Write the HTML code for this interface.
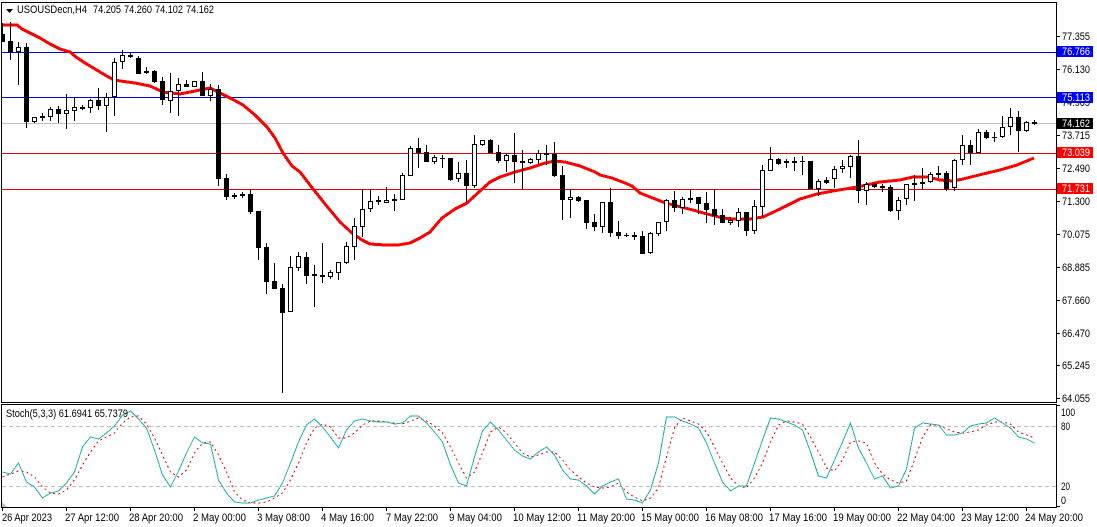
<!DOCTYPE html>
<html>
<head>
<meta charset="utf-8">
<title>USOUSDecn,H4</title>
<style>
html,body{margin:0;padding:0;background:#fff;width:1097px;height:527px;overflow:hidden}
svg{display:block}
text{font-family:"Liberation Sans",sans-serif;font-size:11px;fill:#000}
.w{fill:#fff}
.c{shape-rendering:crispEdges}
</style>
</head>
<body>
<svg width="1097" height="527" viewBox="0 0 1097 527" xmlns="http://www.w3.org/2000/svg">
<rect width="1097" height="527" fill="#fff"/>
<defs><clipPath id="m"><rect x="2" y="3" width="1054" height="399"/></clipPath><clipPath id="s"><rect x="2" y="405" width="1054" height="102"/></clipPath></defs>

<!-- horizontal levels -->
<g class="c" fill="none" stroke-width="1">
<path d="M2 52.5H1056M2 97.5H1056" stroke="#0000e6"/>
<path d="M2 123.5H1056" stroke="#c0c0c0"/>
<path d="M2 153.5H1056M2 189.5H1056" stroke="#dc0000"/>
</g>

<g clip-path="url(#m)">
<!-- moving average -->
<polyline fill="none" stroke="#ff0000" stroke-width="3" class="c" points="2,25 17,25 22,29 30,33 40,38 50,44 60,49 70,52 76,57 85,63 95,69 105,75 112,79 120,81 135,83 150,86 163,92 180,94 190,92 200,90 210,88 222,94 232,99 243,105 255,115 267,127 275,138 283,153 292,166 300,172 310,185 325,204 340,222 352,233 362,240 370,244 385,245 398,245 410,243 420,238 430,232 442,218 455,209 467,203 480,191 490,182 500,177 515,172 530,168 545,163 555,161 565,162 580,166 595,172 600,175 612,178 625,183 632,186 640,193 650,197 663,202 673,205 693,210 707,214 723,218 733,219 750,219 763,217 780,209 800,199 817,194 833,191 857,187 880,182 900,180 913,177 928,177 940,180 953,181 963,179 983,174 1000,170 1017,165 1034,158"/>

<!-- wicks -->
<path class="c" fill="none" stroke="#000" stroke-width="1" d="M2.5 23V42M10.5 22V60M18.5 42V85M26.5 43V128M34.5 117V123M42.5 113V121M50.5 107V121M58.5 106V123M66.5 94V129M74.5 97V121M82.5 105V110M90.5 99V113M98.5 88V110M106.5 93V132M114.5 58V116M122.5 50V69M130.5 52V58M138.5 56V74M146.5 67V74M154.5 70V83M162.5 77V105M170.5 73V113M178.5 78V116M186.5 80V87M194.5 81V87M202.5 72V96M210.5 84V101M218.5 85V186M226.5 174V200M234.5 193V199M242.5 192V198M250.5 190V214M258.5 211V260M266.5 243V294M274.5 263V289M282.5 284V393M290.5 256V312M298.5 252V271M306.5 252V284M314.5 265V307M322.5 243V283M330.5 270V279M338.5 262V280M346.5 242V264M354.5 218V260M362.5 189V237M370.5 189V212M378.5 196V205M386.5 187V203M394.5 194V211M402.5 173V200M410.5 146V176M418.5 138V168M426.5 145V162M434.5 155V164M442.5 155V168M450.5 158V181M458.5 162V182M466.5 160V202M474.5 135V188M482.5 140V146M490.5 139V153M498.5 145V163M506.5 153V172M514.5 133V183M522.5 150V189M530.5 158V164M538.5 150V164M546.5 145V165M554.5 142V177M562.5 166V220M570.5 190V218M578.5 196V202M586.5 200V229M594.5 214V231M602.5 202V233M610.5 188V237M618.5 221V239M626.5 233V237M634.5 232V240M642.5 231V254M650.5 232V254M658.5 222V236M666.5 199V231M674.5 191V212M682.5 197V214M690.5 189V203M698.5 197V214M706.5 192V223M714.5 189V225M722.5 209V223M730.5 217V225M738.5 208V227M746.5 212V236M754.5 200V234M762.5 165V217M770.5 147V171M778.5 158V165M786.5 159V168M794.5 157V171M802.5 156V175M810.5 161V189M818.5 179V196M826.5 177V184M834.5 166V188M842.5 160V173M850.5 155V178M858.5 140V203M866.5 182V205M874.5 183V188M882.5 184V192M890.5 185V212M898.5 197V220M906.5 184V205M914.5 175V201M922.5 168V189M930.5 172V183M938.5 166V178M946.5 171V191M954.5 159V191M962.5 135V165M970.5 140V165M978.5 129V153M986.5 130V139M994.5 132V142M1002.5 116V138M1010.5 108V135M1018.5 111V152M1026.5 121V132M1034.5 120V125"/>

<!-- bear bodies -->
<path class="c" fill="#000" d="M0 34h5V42H0zM8 41h5V52H8zM24 47h5V122H24zM40 116h5V118H40zM56 109h5V114H56zM80 107h5V109H80zM96 100h5V106H96zM128 55h5V57H128zM136 58h5V74H136zM144 71h5V73H144zM152 71h5V82H152zM160 81h5V100H160zM184 84h5V87H184zM200 81h5V96H200zM216 89h5V179H216zM224 178h5V197H224zM232 195h5V197H232zM240 194h5V196H240zM248 194h5V212H248zM256 211h5V248H256zM264 247h5V282H264zM272 281h5V289H272zM280 288h5V313H280zM304 257h5V276H304zM312 274h5V276H312zM320 275h5V277H320zM392 199h5V201H392zM376 200h5V202H376zM416 148h5V153H416zM424 152h5V162H424zM440 158h5V159H440zM448 158h5V180H448zM464 173h5V186H464zM488 140h5V153H488zM496 152h5V161H496zM512 155h5V162H512zM520 161h5V163H520zM544 153h5V155H544zM552 154h5V176H552zM560 175h5V200H560zM576 197h5V201H576zM584 200h5V223H584zM592 222h5V227H592zM608 202h5V233H608zM616 232h5V236H616zM624 235h5V236H624zM632 235h5V237H632zM640 236h5V254H640zM672 200h5V208H672zM688 198h5V200H688zM696 197h5V204H696zM704 203h5V210H704zM712 209h5V216H712zM720 215h5V223H720zM744 212h5V231H744zM776 159h5V164H776zM784 161h5V163H784zM792 161h5V163H792zM800 161h5V162H800zM808 161h5V189H808zM824 180h5V183H824zM856 156h5V191H856zM872 184h5V187H872zM880 186h5V188H880zM888 187h5V211H888zM912 183h5V185H912zM920 182h5V184H920zM936 173h5V175H936zM944 173h5V189H944zM968 145h5V153H968zM984 132h5V138H984zM992 137h5V138H992zM1016 117h5V131H1016zM1032 122h5V124H1032z"/>

<!-- bull bodies -->
<path class="c" fill="#fff" stroke="#000" stroke-width="1" d="M16.5 47.5h4V51.5h-4zM32.5 117.5h4V121.5h-4zM48.5 109.5h4V116.5h-4zM64.5 110.5h4V113.5h-4zM72.5 107.5h4V110.5h-4zM88.5 100.5h4V107.5h-4zM104.5 97.5h4V105.5h-4zM112.5 62.5h4V96.5h-4zM120.5 55.5h4V61.5h-4zM168.5 91.5h4V100.5h-4zM176.5 84.5h4V90.5h-4zM192.5 81.5h4V86.5h-4zM208.5 89.5h4V95.5h-4zM288.5 267.5h4V311.5h-4zM296.5 256.5h4V267.5h-4zM328.5 272.5h4V276.5h-4zM336.5 262.5h4V272.5h-4zM344.5 246.5h4V262.5h-4zM352.5 226.5h4V246.5h-4zM360.5 209.5h4V226.5h-4zM368.5 201.5h4V208.5h-4zM384.5 200.5h4V202.5h-4zM400.5 175.5h4V199.5h-4zM408.5 148.5h4V175.5h-4zM432.5 157.5h4V161.5h-4zM456.5 173.5h4V178.5h-4zM472.5 144.5h4V185.5h-4zM480.5 140.5h4V144.5h-4zM504.5 155.5h4V160.5h-4zM528.5 159.5h4V162.5h-4zM536.5 153.5h4V159.5h-4zM568.5 197.5h4V199.5h-4zM600.5 202.5h4V226.5h-4zM648.5 233.5h4V252.5h-4zM656.5 222.5h4V233.5h-4zM664.5 200.5h4V221.5h-4zM680.5 199.5h4V207.5h-4zM728.5 220.5h4V222.5h-4zM736.5 212.5h4V220.5h-4zM752.5 206.5h4V230.5h-4zM760.5 170.5h4V206.5h-4zM768.5 159.5h4V170.5h-4zM816.5 181.5h4V188.5h-4zM832.5 169.5h4V178.5h-4zM840.5 166.5h4V168.5h-4zM848.5 156.5h4V166.5h-4zM864.5 184.5h4V190.5h-4zM896.5 200.5h4V210.5h-4zM904.5 184.5h4V198.5h-4zM928.5 174.5h4V181.5h-4zM952.5 160.5h4V187.5h-4zM960.5 145.5h4V159.5h-4zM976.5 132.5h4V152.5h-4zM1000.5 127.5h4V136.5h-4zM1008.5 117.5h4V126.5h-4zM1024.5 122.5h4V130.5h-4z"/>
</g>

<!-- indicator levels -->
<path class="c" d="M2 426.5H1056M2 486.5H1056" fill="none" stroke="#c0c0c0" stroke-width="1" stroke-dasharray="4 3"/>

<g clip-path="url(#s)">
<polyline fill="none" stroke="#ff0000" stroke-width="1" stroke-dasharray="2 3" class="c" points="2.5,477 10.5,474 18.5,471 26.5,472 34.5,477 42.5,487 50.5,493 58.5,494 66.5,490 74.5,480 82.5,465 90.5,452 98.5,441 106.5,437 114.5,433 122.5,423 130.5,417 138.5,416 146.5,424 154.5,438 162.5,455 170.5,472 178.5,477 186.5,470 194.5,453 202.5,443 210.5,442 218.5,455 226.5,472 234.5,492 242.5,500 250.5,503 258.5,503 266.5,502 274.5,498 282.5,493 290.5,480 298.5,463 306.5,443 314.5,428 322.5,424 330.5,427 338.5,438 346.5,438 354.5,433 362.5,425 370.5,421 378.5,421 386.5,422 394.5,423 402.5,424 410.5,421 418.5,418 426.5,421 434.5,426 442.5,433 450.5,447 458.5,463 466.5,478 474.5,472 482.5,453 490.5,432 498.5,427 506.5,433 514.5,443 522.5,453 530.5,457 538.5,455 546.5,452 554.5,452 562.5,460 570.5,470 578.5,477 586.5,483 594.5,487 602.5,488 610.5,487 618.5,483 626.5,492 634.5,497 642.5,501 650.5,498 658.5,488 666.5,457 674.5,428 682.5,418 690.5,421 698.5,424 706.5,432 714.5,447 722.5,463 730.5,478 738.5,486 746.5,488 754.5,478 762.5,463 770.5,442 778.5,425 786.5,421 794.5,422 802.5,424 810.5,437 818.5,452 826.5,468 834.5,471 842.5,460 850.5,442 858.5,441 866.5,443 874.5,463 882.5,474 890.5,480 898.5,483 906.5,481 914.5,460 922.5,437 930.5,425 938.5,425 946.5,429 954.5,432 962.5,433 970.5,432 978.5,430 986.5,425 994.5,422 1002.5,422 1010.5,424 1018.5,432 1026.5,435 1034.5,438"/>
<polyline fill="none" stroke="#20b2aa" stroke-width="1" class="c" points="2.5,472 10.5,474 18.5,463 26.5,482 34.5,487 42.5,498 50.5,493 58.5,491 66.5,483 74.5,472 82.5,447 90.5,437 98.5,439 106.5,433 114.5,426 122.5,415 130.5,411 138.5,419 146.5,428 154.5,450 162.5,475 170.5,487 178.5,471 186.5,453 194.5,437 202.5,443 210.5,444 218.5,480 226.5,493 234.5,502 242.5,503 250.5,503 258.5,500 266.5,498 274.5,496 282.5,483 290.5,463 298.5,442 306.5,425 314.5,419 322.5,427 330.5,437 338.5,448 346.5,430 354.5,421 362.5,419 370.5,421 378.5,422 386.5,422 394.5,424 402.5,423 410.5,416 418.5,416 426.5,423 434.5,432 442.5,442 450.5,465 458.5,483 466.5,486 474.5,457 482.5,431 490.5,422 498.5,430 506.5,440 514.5,450 522.5,456 530.5,459 538.5,452 546.5,447 554.5,455 562.5,470 570.5,479 578.5,480 586.5,486 594.5,494 602.5,486 610.5,482 618.5,479 626.5,499 634.5,500 642.5,503 650.5,490 658.5,463 666.5,417 674.5,417 682.5,421 690.5,424 698.5,428 706.5,443 714.5,463 722.5,482 730.5,491 738.5,486 746.5,486 754.5,463 762.5,440 770.5,418 778.5,419 786.5,422 794.5,425 802.5,430 810.5,452 818.5,476 826.5,478 834.5,460 842.5,442 850.5,423 858.5,448 866.5,463 874.5,479 882.5,476 890.5,488 898.5,486 906.5,469 914.5,428 922.5,423 930.5,424 938.5,425 946.5,435 954.5,435 962.5,433 970.5,426 978.5,424 986.5,423 994.5,418 1002.5,423 1010.5,428 1018.5,437 1026.5,439 1034.5,443"/>
</g>
<path d="M2 502L7 507H2z" fill="#c0c0c0"/>

<!-- frames and ticks -->
<path class="c" fill="none" stroke="#000" stroke-width="1" d="M1.5 2.5H1056.5V402.5H1.5zM1.5 404.5H1056.5V507.5H1.5zM1057 36.5h3M1057 69.5h3M1057 102.5h3M1057 135.5h3M1057 168.5h3M1057 201.5h3M1057 234.5h3M1057 267.5h3M1057 300.5h3M1057 333.5h3M1057 365.5h3M1057 398.5h3M1057 405.5h3M1057 506.5h3M2.5 507V511M66.5 507V511M130.5 507V511M194.5 507V511M258.5 507V511M322.5 507V511M386.5 507V511M450.5 507V511M514.5 507V511M578.5 507V511M642.5 507V511M706.5 507V511M770.5 507V511M834.5 507V511M898.5 507V511M962.5 507V511M1026.5 507V511"/>

<!-- title -->
<path d="M6 9h7l-3.5 4z" fill="#000"/>
<text x="17" y="13" textLength="70" lengthAdjust="spacingAndGlyphs">USOUSDecn,H4</text>
<text x="93" y="13" textLength="28" lengthAdjust="spacingAndGlyphs">74.205</text>
<text x="124" y="13" textLength="28" lengthAdjust="spacingAndGlyphs">74.260</text>
<text x="155" y="13" textLength="28" lengthAdjust="spacingAndGlyphs">74.102</text>
<text x="186" y="13" textLength="28" lengthAdjust="spacingAndGlyphs">74.162</text>
<text x="6" y="417" textLength="122" lengthAdjust="spacingAndGlyphs">Stoch(5,3,3) 61.6941 65.7379</text>

<!-- price axis -->
<g>
<text x="1062" y="40" textLength="28" lengthAdjust="spacingAndGlyphs">77.355</text>
<text x="1062" y="73" textLength="28" lengthAdjust="spacingAndGlyphs">76.130</text>
<text x="1062" y="106" textLength="28" lengthAdjust="spacingAndGlyphs">74.905</text>
<text x="1062" y="139" textLength="28" lengthAdjust="spacingAndGlyphs">73.715</text>
<text x="1062" y="172" textLength="28" lengthAdjust="spacingAndGlyphs">72.490</text>
<text x="1062" y="205" textLength="28" lengthAdjust="spacingAndGlyphs">71.300</text>
<text x="1062" y="238" textLength="28" lengthAdjust="spacingAndGlyphs">70.075</text>
<text x="1062" y="271" textLength="28" lengthAdjust="spacingAndGlyphs">68.885</text>
<text x="1062" y="304" textLength="28" lengthAdjust="spacingAndGlyphs">67.660</text>
<text x="1062" y="337" textLength="28" lengthAdjust="spacingAndGlyphs">66.470</text>
<text x="1062" y="369" textLength="28" lengthAdjust="spacingAndGlyphs">65.245</text>
<text x="1062" y="402" textLength="28" lengthAdjust="spacingAndGlyphs">64.055</text>
</g>

<!-- price tags -->
<rect x="1057" y="46" width="36" height="11" fill="#0000ff"/>
<text class="w" x="1062" y="55" textLength="28" lengthAdjust="spacingAndGlyphs">76.766</text>
<rect x="1057" y="92" width="36" height="11" fill="#0000ff"/>
<text class="w" x="1062" y="101" textLength="28" lengthAdjust="spacingAndGlyphs">75.113</text>
<rect x="1057" y="118" width="36" height="11" fill="#000"/>
<text class="w" x="1062" y="127" textLength="28" lengthAdjust="spacingAndGlyphs">74.162</text>
<rect x="1057" y="147" width="36" height="11" fill="#ff0000"/>
<text class="w" x="1062" y="156" textLength="28" lengthAdjust="spacingAndGlyphs">73.039</text>
<rect x="1057" y="183" width="36" height="11" fill="#ff0000"/>
<text class="w" x="1062" y="192" textLength="28" lengthAdjust="spacingAndGlyphs">71.731</text>

<!-- indicator axis -->
<text x="1061" y="416" textLength="14" lengthAdjust="spacingAndGlyphs">100</text>
<text x="1061" y="430" textLength="9" lengthAdjust="spacingAndGlyphs">80</text>
<text x="1061" y="490" textLength="9" lengthAdjust="spacingAndGlyphs">20</text>
<text x="1061" y="504" textLength="5" lengthAdjust="spacingAndGlyphs">0</text>

<!-- time axis -->
<text x="2" y="521" textLength="50" lengthAdjust="spacingAndGlyphs">26 Apr 2023</text>
<text x="65" y="521" textLength="54" lengthAdjust="spacingAndGlyphs">27 Apr 12:00</text>
<text x="129" y="521" textLength="54" lengthAdjust="spacingAndGlyphs">28 Apr 20:00</text>
<text x="193" y="521" textLength="53" lengthAdjust="spacingAndGlyphs">2 May 00:00</text>
<text x="257" y="521" textLength="53" lengthAdjust="spacingAndGlyphs">3 May 08:00</text>
<text x="321" y="521" textLength="53" lengthAdjust="spacingAndGlyphs">4 May 16:00</text>
<text x="386" y="521" textLength="52" lengthAdjust="spacingAndGlyphs">7 May 22:00</text>
<text x="449" y="521" textLength="53" lengthAdjust="spacingAndGlyphs">9 May 04:00</text>
<text x="513" y="521" textLength="58" lengthAdjust="spacingAndGlyphs">10 May 12:00</text>
<text x="577" y="521" textLength="58" lengthAdjust="spacingAndGlyphs">11 May 20:00</text>
<text x="641" y="521" textLength="58" lengthAdjust="spacingAndGlyphs">15 May 00:00</text>
<text x="705" y="521" textLength="58" lengthAdjust="spacingAndGlyphs">16 May 08:00</text>
<text x="769" y="521" textLength="58" lengthAdjust="spacingAndGlyphs">17 May 16:00</text>
<text x="833" y="521" textLength="58" lengthAdjust="spacingAndGlyphs">19 May 00:00</text>
<text x="897" y="521" textLength="58" lengthAdjust="spacingAndGlyphs">22 May 04:00</text>
<text x="961" y="521" textLength="58" lengthAdjust="spacingAndGlyphs">23 May 12:00</text>
<text x="1025" y="521" textLength="58" lengthAdjust="spacingAndGlyphs">24 May 20:00</text>
</svg>
</body>
</html>
